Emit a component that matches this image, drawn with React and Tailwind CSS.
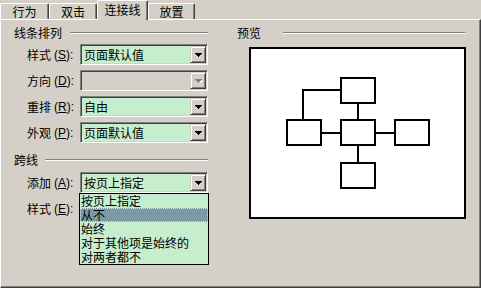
import React from "react";

function Tab({ label, w, selected }) {
  if (selected) {
    return (
      <div
        className={`${w} relative z-10 -mb-px h-[20px] bg-[#d4d0c8] border-t border-l border-white rounded-tl-[2px] rounded-tr-[2px] border-r border-r-[#404040] shadow-[inset_-1px_0_0_#808080] flex items-start justify-center pt-[3px]`}
      >
        <span>{label}</span>
      </div>
    );
  }
  return (
    <div
      className={`${w} h-[16px] bg-[#d4d0c8] border-t border-l border-white rounded-tl-[2px] rounded-tr-[2px] border-r border-r-[#404040] shadow-[inset_-1px_0_0_#808080] flex items-center justify-center pt-[1px]`}
    >
      <span>{label}</span>
    </div>
  );
}

function Arrow({ disabled }) {
  return (
    <svg width="7" height="4" viewBox="0 0 7 4" shapeRendering="crispEdges">
      {disabled ? (
        <>
          <polygon points="1,1 8,1 4.5,5" fill="#ffffff" />
          <polygon points="0,0 7,0 3.5,4" fill="#808080" />
        </>
      ) : (
        <polygon points="0,0 7,0 3.5,4" fill="#000000" />
      )}
    </svg>
  );
}

function Combo({ value, disabled, children }) {
  return (
    <div
      className={`relative w-[128px] h-[21px] border-t border-l border-t-[#808080] border-l-[#808080] border-b border-r border-b-white border-r-white shadow-[inset_1px_1px_0_#404040,inset_-1px_-1px_0_#d4d0c8] ${
        disabled ? "bg-[#d4d0c8]" : "bg-[#c6eecd]"
      } flex items-center`}
    >
      <div className="pl-[3px] flex-1">{value ? <span>{value}</span> : null}</div>
      <div className="mr-[1px] w-[16px] h-[17px] bg-[#d4d0c8] border-t border-l border-t-[#d4d0c8] border-l-[#d4d0c8] border-b border-r border-b-[#404040] border-r-[#404040] shadow-[inset_1px_1px_0_#ffffff,inset_-1px_-1px_0_#808080] flex items-center justify-center">
        <Arrow disabled={disabled} />
      </div>
      {children}
    </div>
  );
}

function Label({ name, acc }) {
  return (
    <div className="w-[53px] flex items-center whitespace-nowrap">
      <span>{name}</span>
      <span className="ml-[3px] font-['Liberation_Sans',sans-serif]">
        (<span className="underline underline-offset-1">{acc}</span>):
      </span>
    </div>
  );
}

function Row({ name, acc, value, disabled, children }) {
  return (
    <div className="flex items-center h-[21px] pl-[26px]">
      <Label name={name} acc={acc} />
      <Combo value={value} disabled={disabled}>
        {children}
      </Combo>
    </div>
  );
}

function GroupHeader({ title, lineClass }) {
  return (
    <div className="flex items-center h-[14px]">
      <span>{title}</span>
      <div className={`${lineClass} h-[2px] border-t border-t-[#808080] border-b border-b-white`} />
    </div>
  );
}

export default function App() {
  const items = ["按页上指定", "从不", "始终", "对于其他项是始终的", "对两者都不"];
  return (
    <div className="w-[481px] h-[288px] bg-[#d4d0c8] text-black text-[12px] leading-none overflow-hidden font-['Noto_Sans_CJK_SC','Liberation_Sans',sans-serif]">
      <div className="flex items-end h-[19px]">
        <Tab label="行为" w="w-[49px]" />
        <Tab label="双击" w="w-[48px]" />
        <Tab label="连接线" w="w-[51px]" selected />
        <Tab label="放置" w="w-[47px]" />
      </div>
      <div className="h-[269px] border-t border-l border-white border-r border-b border-r-[#404040] border-b-[#404040] shadow-[inset_-1px_-1px_0_#808080] flex">
        {/* left column */}
        <div className="w-[220px] flex flex-col">
          <div className="mt-[6px] pl-[13px]">
            <GroupHeader title="线条排列" lineClass="ml-[8px] w-[138px]" />
          </div>
          <div className="mt-[4px] flex flex-col gap-[5px]">
            <Row name="样式" acc="S" value="页面默认值" />
            <Row name="方向" acc="D" value="" disabled />
            <Row name="重排" acc="R" value="自由" />
            <Row name="外观" acc="P" value="页面默认值" />
          </div>
          <div className="mt-[10px] pl-[13px]">
            <GroupHeader title="跨线" lineClass="ml-[7px] w-[163px]" />
          </div>
          <div className="mt-[5px] flex flex-col gap-[5px]">
            <Row name="添加" acc="A" value="按页上指定">
              <div className="absolute z-20 left-[-2px] top-[20px] w-[130px] h-[72px] bg-[#c6eecd] border border-black flex flex-col">
                {items.map((it, i) => (
                  <div
                    key={it}
                    className={`h-[14px] flex items-center pl-[1px] ${
                      i === 1 ? "bg-[#7c99a4] outline-1 outline-dotted outline-[#c6eecd] -outline-offset-1" : ""
                    }`}
                  >
                    {it}
                  </div>
                ))}
              </div>
            </Row>
            <Row name="样式" acc="E" value="" />
          </div>
        </div>
        {/* right column */}
        <div className="flex-1 flex flex-col pl-[16px]">
          <div className="mt-[6px]">
            <GroupHeader title="预览" lineClass="ml-[22px] w-[182px]" />
          </div>
          <div className="mt-[7px] ml-[12px] w-[217px] h-[172px] bg-white border-2 border-black">
            <svg width="213" height="168" viewBox="0 0 213 168" shapeRendering="crispEdges">
              <g fill="white" stroke="black" strokeWidth="2">
                <polyline points="90,41 52,41 52,71" fill="none" />
                <line x1="107" y1="54" x2="107" y2="71" />
                <line x1="70" y1="84" x2="90" y2="84" />
                <line x1="124" y1="84" x2="144" y2="84" />
                <line x1="107" y1="96" x2="107" y2="114" />
                <rect x="90" y="29" width="34" height="25" />
                <rect x="36" y="71" width="34" height="25" />
                <rect x="90" y="71" width="34" height="25" />
                <rect x="144" y="71" width="34" height="25" />
                <rect x="90" y="114" width="34" height="25" />
              </g>
            </svg>
          </div>
        </div>
      </div>
    </div>
  );
}
